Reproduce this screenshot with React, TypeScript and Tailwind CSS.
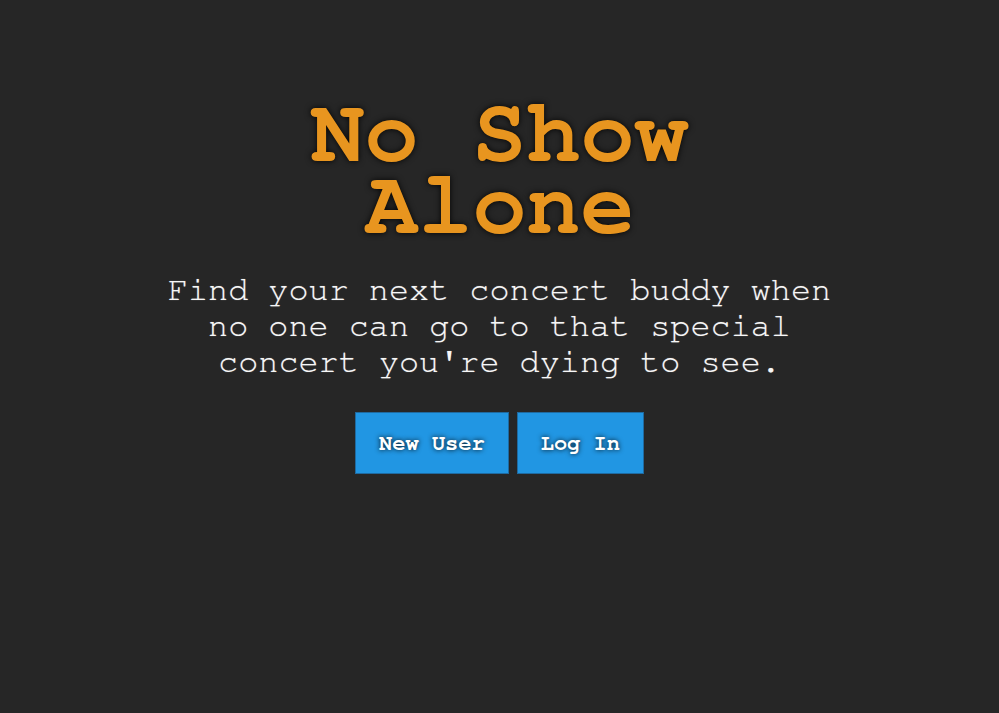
import React from "react";

export default function App() {
  const mono = {
    fontFamily:
      '"Nimbus Mono PS", "Nimbus Mono L", "FreeMono", "Courier 10 Pitch", "Courier", "Liberation Mono", monospace',
  };
  return (
    <div
      className="min-h-[713px] w-full bg-[#262626] flex flex-col items-center pt-[98px]"
      style={mono}
    >
      <h1 className="text-[90px] leading-[72px] font-bold text-[#e8951f] text-center [text-shadow:0_0_6px_rgba(0,0,0,0.9)]">
        No Show
        <br />
        Alone
      </h1>
      <p className="mt-[30px] w-[700px] text-center text-[33.5px] leading-[36px] text-[#f7f7f7] [text-shadow:0_0_1px_rgba(255,255,255,0.5)]">
        Find your next concert buddy when no one can go to that special concert you're dying to see.
      </p>
      <div className="mt-[32px] flex gap-[8px]">
        <button className="h-[62px] px-[23px] bg-[#2196e3] border border-[#1f6aa0] text-white font-bold text-[22px] [text-shadow:0_0_5px_rgba(0,0,0,0.9)]">
          New User
        </button>
        <button className="h-[62px] px-[23px] bg-[#2196e3] border border-[#1f6aa0] text-white font-bold text-[22px] [text-shadow:0_0_5px_rgba(0,0,0,0.9)]">
          Log In
        </button>
      </div>
    </div>
  );
}
